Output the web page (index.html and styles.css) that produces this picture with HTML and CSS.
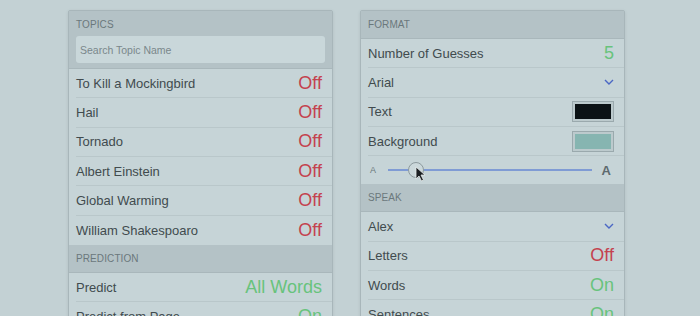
FILE: index.html
```html
<!DOCTYPE html>
<html lang="en">
<head>
  <title>Settings</title>
  <link rel="stylesheet" href="styles.css">
</head>
<body>
  <div class="panels">
    <div class="panel">
      <div class="section-head tall">
        <div class="caption">Topics</div>
        <div class="search">Search Topic Name</div>
      </div>
      <div class="row"><span>To Kill a Mockingbird</span><span class="val off">Off</span></div>
      <div class="row"><span>Hail</span><span class="val off">Off</span></div>
      <div class="row"><span>Tornado</span><span class="val off">Off</span></div>
      <div class="row"><span>Albert Einstein</span><span class="val off">Off</span></div>
      <div class="row"><span>Global Warming</span><span class="val off">Off</span></div>
      <div class="row last"><span>William Shakespoaro</span><span class="val off">Off</span></div>
      <div class="section-head"><div class="caption">Prediction</div></div>
      <div class="row"><span>Predict</span><span class="val on">All Words</span></div>
      <div class="row"><span>Predict from Page</span><span class="val on">On</span></div>
    </div>

    <div class="panel">
      <div class="section-head"><div class="caption">Format</div></div>
      <div class="row"><span>Number of Guesses</span><span class="val on">5</span></div>
      <div class="row"><span>Arial</span>
        <svg class="chev" width="10" height="6" viewBox="0 0 10 6"><path d="M1 1 L5 5 L9 1" fill="none" stroke="#4a67c4" stroke-width="1.4"/></svg>
      </div>
      <div class="row"><span>Text</span><span class="swatch"><span class="fill dark"></span></span></div>
      <div class="row"><span>Background</span><span class="swatch"><span class="fill teal"></span></span></div>
      <div class="row slider last">
        <span class="a-small">A</span>
        <div class="track">
          <span class="thumb"></span>
          <svg class="cursor" width="12" height="16" viewBox="0 0 12 16"><path d="M1 1 L1 13 L4 10 L6.5 15 L8.5 14 L6 9 L10 9 Z" fill="#1b1f22" stroke="#e8eeee" stroke-width="0.8"/></svg>
        </div>
        <span class="a-big">A</span>
      </div>
      <div class="section-head"><div class="caption">Speak</div></div>
      <div class="row"><span>Alex</span>
        <svg class="chev" width="10" height="6" viewBox="0 0 10 6"><path d="M1 1 L5 5 L9 1" fill="none" stroke="#4a67c4" stroke-width="1.4"/></svg>
      </div>
      <div class="row"><span>Letters</span><span class="val off">Off</span></div>
      <div class="row"><span>Words</span><span class="val on">On</span></div>
      <div class="row"><span>Sentences</span><span class="val on">On</span></div>
    </div>
  </div>
</body>
</html>
```

FILE: styles.css
```css
* {
  box-sizing: border-box;
}

body {
  margin: 0;
  height: 316px;
  overflow: hidden;
  background: #c3d1d4;
  font-family: "Liberation Sans", Arial, sans-serif;
  color: #414b4e;
}

.panels {
  display: flex;
  gap: 27px;
  padding: 10px 0 0 68px;
}

.panel {
  width: 265px;
  background: #c6d4d7;
  border: 1px solid #a8b6ba;
  border-radius: 2px;
  box-shadow: 0 1px 3px rgba(60, 80, 85, 0.15);
}

.section-head {
  background: #b4c2c6;
  height: 28px;
  padding: 0 7px;
  display: flex;
  flex-direction: column;
  justify-content: center;
  border-bottom: 1px solid #a9b7bb;
}

.section-head.tall {
  height: 58px;
  justify-content: flex-start;
  padding-top: 8px;
}

.caption {
  font-size: 10px;
  text-transform: uppercase;
  color: #6b787c;
  letter-spacing: 0.1px;
}

.search {
  margin-top: 6px;
  height: 27px;
  background: #c9d7da;
  border-radius: 3px;
  font-size: 10.5px;
  color: #7a878b;
  padding: 0 4px;
  display: flex;
  align-items: center;
}

.row {
  height: 29.33px;
  margin-left: 7px;
  padding-right: 10px;
  display: flex;
  align-items: center;
  justify-content: space-between;
  font-size: 13px;
  border-bottom: 1px solid #b9c7ca;
}

.row.last {
  border-bottom: none;
}

.val {
  font-size: 18px;
}

.off {
  color: #c4424f;
}

.on {
  color: #68c37c;
}

.swatch {
  width: 42px;
  height: 21px;
  border: 1px solid #9aa9ad;
  background: #bccacd;
  padding: 2px;
  display: flex;
}

.fill {
  flex: 1;
}

.fill.dark {
  background: #0b1215;
}

.fill.teal {
  background: #86b5b1;
}

.slider {
  height: 28px;
  padding-left: 2px;
  padding-right: 13px;
}

.a-small {
  font-size: 9px;
  color: #6b787c;
}

.a-big {
  font-size: 13px;
  font-weight: bold;
  color: #5d6a6e;
}

.track {
  position: relative;
  flex: 1;
  height: 2px;
  margin: 0 10px 0 12px;
  background: #7f9bd4;
}

.thumb {
  position: absolute;
  left: 20px;
  top: -7px;
  width: 16px;
  height: 16px;
  border-radius: 50%;
  background: #cbd8db;
  border: 1px solid #8d9a9e;
}

.cursor {
  position: absolute;
  left: 27px;
  top: -3px;
}
```
